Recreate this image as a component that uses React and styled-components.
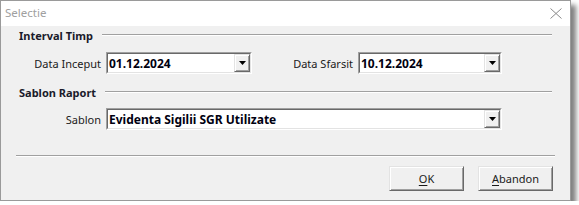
import React from "react";
import styled, { createGlobalStyle } from "styled-components";

const GlobalStyle = createGlobalStyle`
  html, body {
    margin: 0;
    padding: 0;
    background: #ffffff;
  }
  body {
    font-family: "Noto Sans", "Open Sans", sans-serif;
    font-size: 11px;
    color: #1a1a1a;
  }
`;

const Frame = styled.div`
  width: 569px;
  height: 199px;
  border: 1px solid #9a9a9a;
  background: #f0f0f0;
  box-shadow: 5px 5px 5px 0 rgba(0, 0, 0, 0.5);
  display: flex;
  flex-direction: column;
`;

const TitleBar = styled.div`
  height: 25px;
  background: #ffffff;
  display: flex;
  align-items: center;
  justify-content: space-between;
  padding: 0 8px 0 4px;
  color: #a0a0a0;
  flex-shrink: 0;
`;

const Title = styled.span`
  font-size: 11.5px;
  line-height: 1;
  margin-top: -1px;
`;

const CloseIcon = () => (
  <svg width="12" height="11" viewBox="0 0 12 11">
    <path d="M0.5 0.5 L11.5 10.5 M11.5 0.5 L0.5 10.5" stroke="#8a8a8a" strokeWidth="1" fill="none" />
  </svg>
);

const Body = styled.div`
  flex: 1;
  display: flex;
  flex-direction: column;
  padding: 1px 18px 0 18px;
`;

const GroupHeader = styled.div`
  display: flex;
  align-items: center;
  height: 16px;
  margin-top: ${(p) => p.$top}px;
  gap: 9px;
`;

const GroupTitle = styled.span`
  font-weight: 700;
  font-size: 11px;
  color: #1a1a2a;
  white-space: nowrap;
`;

const EtchedLine = styled.div`
  flex: 1;
  height: 0;
  border-top: 1px solid #a0a0a0;
  border-bottom: 1px solid #ffffff;
`;

const Row = styled.div`
  display: flex;
  align-items: center;
  height: 22px;
  margin-top: ${(p) => p.$top}px;
`;

const Label = styled.label`
  width: ${(p) => p.$width}px;
  text-align: right;
  padding-right: 5px;
  box-sizing: border-box;
  white-space: nowrap;
`;

const ComboBox = styled.div`
  width: ${(p) => p.$width}px;
  height: 22px;
  box-sizing: border-box;
  display: flex;
  background: #ffffff;
  border-style: solid;
  border-width: 1px;
  border-color: #a0a0a0 #ffffff #ffffff #a0a0a0;
`;

const ComboInner = styled.div`
  flex: 1;
  display: flex;
  align-items: center;
  border-style: solid;
  border-width: 1px;
  border-color: #696969 #e3e3e3 #e3e3e3 #696969;
`;

const ComboText = styled.span`
  flex: 1;
  padding-left: 1px;
  font-size: 12px;
  font-weight: 700;
  color: #000010;
  white-space: nowrap;
  overflow: hidden;
`;

const ArrowButton = styled.div`
  width: 16px;
  align-self: stretch;
  box-sizing: border-box;
  background: #f0f0f0;
  border-style: solid;
  border-width: 1px;
  border-color: #e3e3e3 #696969 #696969 #e3e3e3;
  display: flex;
  align-items: center;
  justify-content: center;
  box-shadow: inset 1px 1px 0 #ffffff, inset -1px -1px 0 #a0a0a0;
`;

const Arrow = () => (
  <svg width="7" height="4" viewBox="0 0 7 4">
    <path d="M0 0 H7 L3.5 4 Z" fill="#000000" />
  </svg>
);

const Combo = ({ width, value }) => (
  <ComboBox $width={width}>
    <ComboInner>
      <ComboText>{value}</ComboText>
      <ArrowButton>
        <Arrow />
      </ArrowButton>
    </ComboInner>
  </ComboBox>
);

const Footer = styled.div`
  display: flex;
  flex-direction: column;
  margin: 25px -3px 0 -3px;
`;

const Separator = styled.div`
  height: 0;
  border-top: 1px solid #a0a0a0;
  border-bottom: 1px solid #ffffff;
`;

const ButtonRow = styled.div`
  display: flex;
  justify-content: flex-end;
  gap: 14px;
  margin-top: 9px;
  padding-right: 2px;
`;

const Button = styled.button`
  width: 75px;
  height: 25px;
  box-sizing: border-box;
  background: #f0f0f0;
  font-family: inherit;
  font-size: 11px;
  color: #1a1a1a;
  border-style: solid;
  border-width: 1px;
  border-color: #e3e3e3 #696969 #696969 #e3e3e3;
  box-shadow: inset 1px 1px 0 #ffffff, inset -1px -1px 0 #a0a0a0;
  padding: 0;
  u {
    text-decoration-thickness: 1px;
    text-underline-offset: 2px;
  }
`;

export default function App() {
  return (
    <>
      <GlobalStyle />
      <Frame>
        <TitleBar>
          <Title>Selectie</Title>
          <CloseIcon />
        </TitleBar>
        <Body>
          <GroupHeader $top={0}>
            <GroupTitle>Interval Timp</GroupTitle>
            <EtchedLine />
          </GroupHeader>
          <Row $top={9}>
            <Label $width={87}>Data Inceput</Label>
            <Combo width={146} value="01.12.2024" />
            <Label $width={106}>Data Sfarsit</Label>
            <Combo width={144} value="10.12.2024" />
          </Row>
          <GroupHeader $top={10}>
            <GroupTitle>Sablon Raport</GroupTitle>
            <EtchedLine />
          </GroupHeader>
          <Row $top={8}>
            <Label $width={87}>Sablon</Label>
            <Combo width={396} value="Evidenta Sigilii SGR Utilizate" />
          </Row>
          <Footer>
            <Separator />
            <ButtonRow>
              <Button>
                <u>O</u>K
              </Button>
              <Button>
                <u>A</u>bandon
              </Button>
            </ButtonRow>
          </Footer>
        </Body>
      </Frame>
    </>
  );
}
